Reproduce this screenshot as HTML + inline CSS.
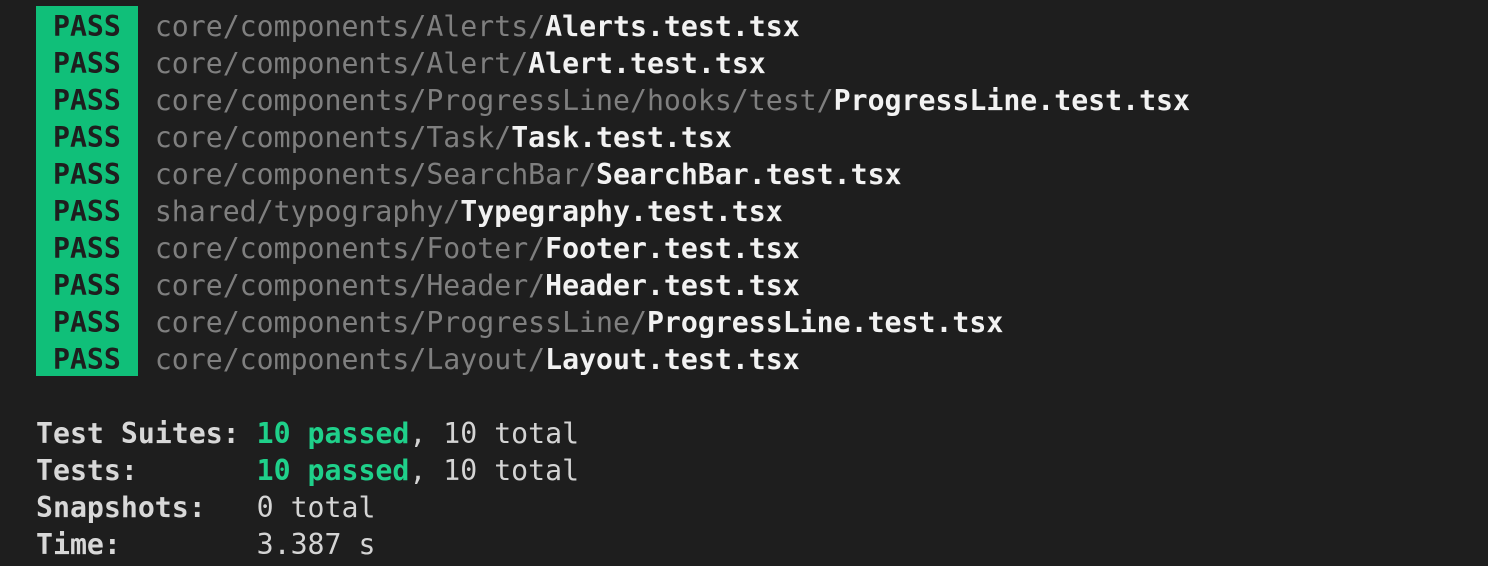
<!DOCTYPE html>
<html><head><style>
html,body{margin:0;padding:0;background:#1e1e1e;width:1488px;height:566px;overflow:hidden}
.t{position:absolute;left:36px;top:8px;font-family:"DejaVu Sans Mono","Liberation Mono",monospace;font-size:28.2px;line-height:37px;white-space:pre;color:#d4d4d4}
.b{font-weight:bold;color:#f2f2f2}
.g{color:#7f7f7f}
.p{background:#10bf79;color:#1e1e1e;font-weight:bold;display:inline-block;height:37px;vertical-align:top;box-shadow:0 -2px 0 #10bf79}
.gr{color:#1fd08a;font-weight:bold}
</style></head><body>
<div class="t"><span class="p"> PASS </span> <span class="g">core/components/Alerts/</span><span class="b">Alerts.test.tsx</span>
<span class="p"> PASS </span> <span class="g">core/components/Alert/</span><span class="b">Alert.test.tsx</span>
<span class="p"> PASS </span> <span class="g">core/components/ProgressLine/hooks/test/</span><span class="b">ProgressLine.test.tsx</span>
<span class="p"> PASS </span> <span class="g">core/components/Task/</span><span class="b">Task.test.tsx</span>
<span class="p"> PASS </span> <span class="g">core/components/SearchBar/</span><span class="b">SearchBar.test.tsx</span>
<span class="p"> PASS </span> <span class="g">shared/typography/</span><span class="b">Typegraphy.test.tsx</span>
<span class="p"> PASS </span> <span class="g">core/components/Footer/</span><span class="b">Footer.test.tsx</span>
<span class="p"> PASS </span> <span class="g">core/components/Header/</span><span class="b">Header.test.tsx</span>
<span class="p"> PASS </span> <span class="g">core/components/ProgressLine/</span><span class="b">ProgressLine.test.tsx</span>
<span class="p" style="height:35px"> PASS </span> <span class="g">core/components/Layout/</span><span class="b">Layout.test.tsx</span>

<span class="b" style="color:#d8d8d8">Test Suites: </span><span class="gr">10 passed</span>, 10 total
<span class="b" style="color:#d8d8d8">Tests:       </span><span class="gr">10 passed</span>, 10 total
<span class="b" style="color:#d8d8d8">Snapshots:   </span>0 total
<span class="b" style="color:#d8d8d8">Time:        </span>3.387 s</div>
</body></html>
